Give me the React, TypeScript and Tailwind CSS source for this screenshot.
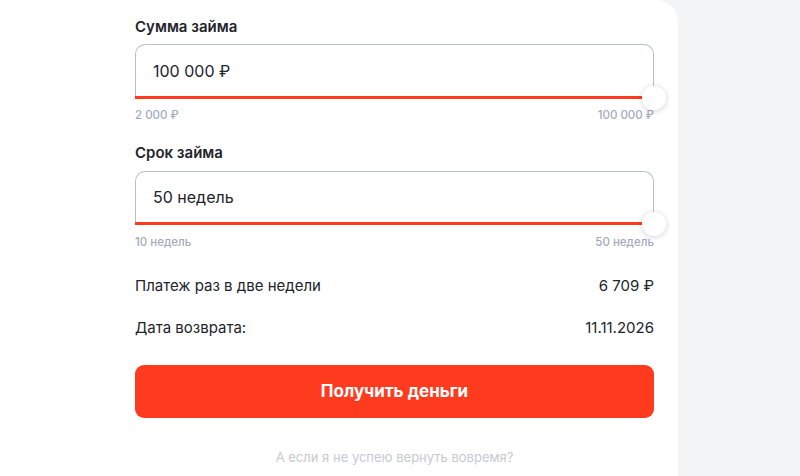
import { useState } from 'react'

type SliderFieldProps = {
  label: string
  value: string
  min: string
  max: string
  labelTop: string
  boxTop: string
  boxHeight: string
  hintTop: string
}

function SliderField({ label, value, min, max, labelTop, boxTop, boxHeight, hintTop }: SliderFieldProps) {
  return (
    <div className={labelTop}>
      <div className="text-[15px] leading-5 font-semibold text-[#22242b]">{label}</div>
      <div className={`relative ${boxTop}`}>
        <div
          className={`${boxHeight} border border-b-0 border-[#b7bdcb] rounded-t-[10px] flex items-center pl-[17px] text-[16px] text-[#22242b]`}
        >
          {value}
        </div>
        <div className="relative h-[3px] bg-[#ff3b1f]">
          <div className="absolute right-[-12px] top-[-10.5px] w-6 h-6 rounded-full bg-white shadow-[0_1px_6px_rgba(0,0,0,0.18)]" />
        </div>
      </div>
      <div className={`flex justify-between text-[11.5px] leading-4 font-medium text-[#a3aabb] ${hintTop}`}>
        <span>{min}</span>
        <span>{max}</span>
      </div>
    </div>
  )
}

export default function App() {
  const [amount] = useState('100 000 ₽')
  const [term] = useState('50 недель')

  return (
    <div className="min-h-screen bg-[#f3f4f6] flex" style={{ fontFamily: 'Inter, "Noto Sans", sans-serif' }}>
      <div className="w-[678px] h-[476px] bg-white rounded-tr-[22px] pl-[135px] pr-[24px] overflow-hidden">
        <SliderField
          label="Сумма займа"
          value={amount}
          min="2 000 ₽"
          max="100 000 ₽"
          labelTop="pt-[17px]"
          boxTop="mt-[7px]"
          boxHeight="h-[52px]"
          hintTop="mt-[8px]"
        />
        <SliderField
          label="Срок займа"
          value={term}
          min="10 недель"
          max="50 недель"
          labelTop="mt-[20px]"
          boxTop="mt-[8px]"
          boxHeight="h-[51px]"
          hintTop="mt-[9px]"
        />

        <div className="mt-[24px] flex justify-between text-[15px] leading-6 text-[#22242b]">
          <span>Платеж раз в две недели</span>
          <span>6 709 ₽</span>
        </div>
        <div className="mt-[18px] flex justify-between text-[15px] leading-6 text-[#22242b]">
          <span>Дата возврата:</span>
          <span>11.11.2026</span>
        </div>

        <button className="mt-[25px] w-full h-[53px] rounded-[9px] bg-[#ff3b1f] text-white text-[17px] font-bold">
          Получить деньги
        </button>

        <div className="mt-[29px] text-center text-[13px] leading-5 text-[#c6c9d0]">
          А если я не успею вернуть вовремя?
        </div>
      </div>
    </div>
  )
}
